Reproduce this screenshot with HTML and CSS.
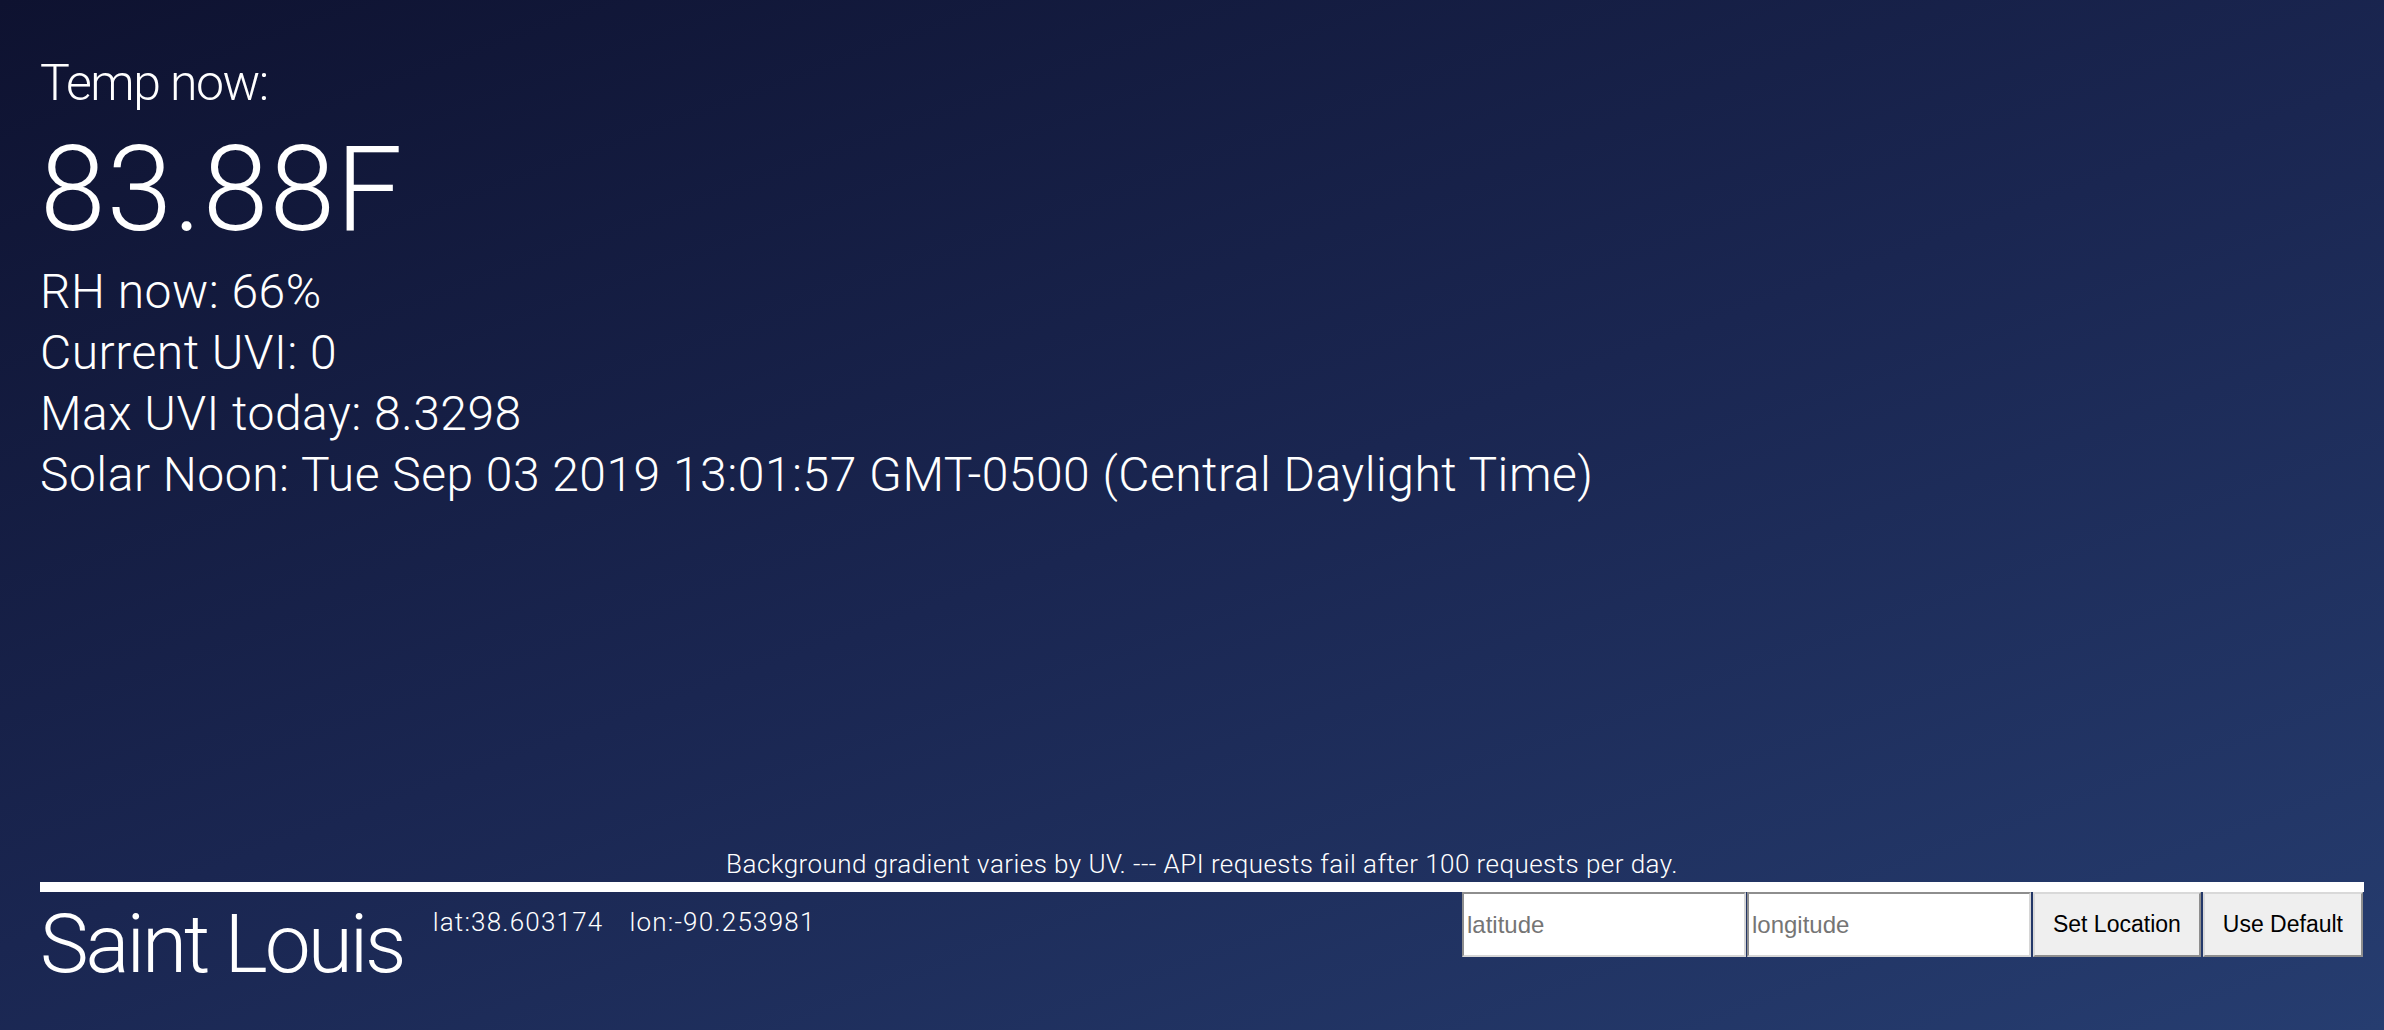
FILE: index.html
```html
<!DOCTYPE html>
<html lang="en">
<head>
<meta charset="utf-8">
<title>Weather</title>
<link rel="stylesheet" href="styles.css">
</head>
<body>
<main class="main">
  <p class="label">Temp now:</p>
  <p class="temp">83.88F</p>
  <p class="stat">RH now: 66%</p>
  <p class="stat">Current UVI: 0</p>
  <p class="stat">Max UVI today: 8.3298</p>
  <p class="stat">Solar Noon: Tue Sep 03 2019 13:01:57 GMT-0500 (Central Daylight Time)</p>
</main>
<footer class="footer">
  <p class="note">Background gradient varies by UV. --- API requests fail after 100 requests per day.</p>
  <div class="bar-row">
    <div class="place">
      <h2 class="city">Saint Louis</h2>
      <span class="coord">lat:38.603174</span>
      <span class="coord">lon:-90.253981</span>
    </div>
    <form class="loc-form">
      <input class="field" type="text" placeholder="latitude">
      <input class="field" type="text" placeholder="longitude">
      <button class="btn" type="button">Set Location</button>
      <button class="btn" type="button">Use Default</button>
    </form>
  </div>
</footer>
</body>
</html>
```
FILE: styles.css
```css
html, body {
  margin: 0;
  height: 100%;
}
body {
  box-sizing: border-box;
  height: 100vh;
  display: flex;
  flex-direction: column;
  padding: 0 20px 0 40px;
  background: linear-gradient(160deg, #0e1230 0%, #1a2651 50%, #263d70 100%);
  color: #ffffff;
  font-family: Roboto, "Liberation Sans", sans-serif;
  font-weight: 300;
  overflow: hidden;
}
.main {
  padding-top: 53px;
}
.label {
  margin: 0;
  font-size: 50px;
  line-height: 60px;
  letter-spacing: -1.5px;
}
.temp {
  margin: 18px 0 12px;
  font-size: 118px;
  line-height: 118px;
  letter-spacing: 1.2px;
}
.stat {
  margin: 0;
  font-size: 48px;
  line-height: 61px;
  letter-spacing: 0.5px;
}
.footer {
  margin-top: auto;
  padding-bottom: 34px;
}
.note {
  margin: 0 0 3px;
  text-align: center;
  font-size: 26px;
  line-height: 30px;
  letter-spacing: 0.45px;
}
.bar-row {
  border-top: 10px solid #ffffff;
  display: flex;
  justify-content: space-between;
  align-items: flex-start;
}
.place {
  display: flex;
  align-items: flex-start;
}
.city {
  margin: 0 29px 0 0;
  font-size: 82px;
  font-weight: 300;
  line-height: 104px;
  letter-spacing: -3px;
}
.coord {
  padding-top: 15px;
  margin-right: 26px;
  font-size: 26px;
  line-height: 30px;
  letter-spacing: 1.2px;
}
.loc-form {
  display: flex;
  gap: 1px;
  margin-right: 1px;
}
.field {
  box-sizing: border-box;
  width: 284px;
  height: 65px;
  margin: 0;
  padding: 0 3px;
  border: 2px solid;
  border-color: #8e8e8e #d6d6d6 #d6d6d6 #8e8e8e;
  background: #ffffff;
  font-family: "Liberation Sans", Arial, sans-serif;
  font-size: 24px;
  color: #000000;
  outline: none;
}
.field::placeholder {
  color: #757575;
}
.btn {
  box-sizing: border-box;
  height: 65px;
  margin: 0 0 0 1px;
  padding: 0 18px;
  border: 2px solid;
  border-color: #d9d9d9 #8e8e8e #8e8e8e #d9d9d9;
  background: #efefef;
  font-family: "Liberation Sans", Arial, sans-serif;
  font-size: 23px;
  color: #000000;
}
```
